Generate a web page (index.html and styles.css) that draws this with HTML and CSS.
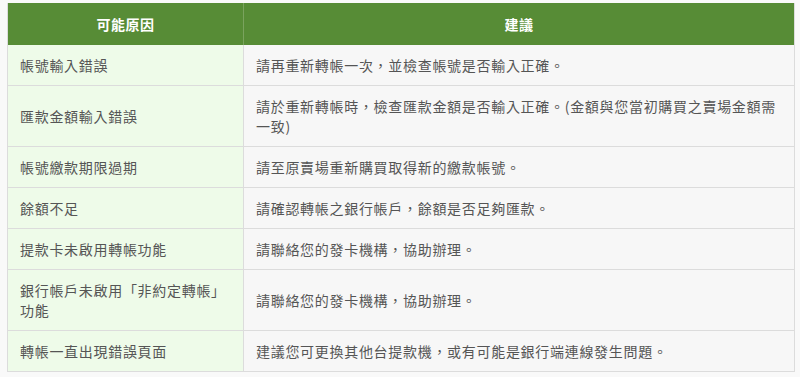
FILE: index.html
```html
<!DOCTYPE html>
<html lang="zh-Hant">
<head>
<meta charset="utf-8">
<link rel="stylesheet" href="styles.css">
</head>
<body>
<table class="faq">
  <colgroup><col class="c1"><col class="c2"></colgroup>
  <thead>
    <tr><th>可能原因</th><th>建議</th></tr>
  </thead>
  <tbody>
    <tr><td>帳號輸入錯誤</td><td>請再重新轉帳一次，並檢查帳號是否輸入正確。</td></tr>
    <tr><td>匯款金額輸入錯誤</td><td>請於重新轉帳時，檢查匯款金額是否輸入正確。(金額與您當初購買之賣場金額需一致)</td></tr>
    <tr><td>帳號繳款期限過期</td><td>請至原賣場重新購買取得新的繳款帳號。</td></tr>
    <tr><td>餘額不足</td><td>請確認轉帳之銀行帳戶，餘額是否足夠匯款。</td></tr>
    <tr><td>提款卡未啟用轉帳功能</td><td>請聯絡您的發卡機構，協助辦理。</td></tr>
    <tr><td>銀行帳戶未啟用「非約定轉帳」功能</td><td>請聯絡您的發卡機構，協助辦理。</td></tr>
    <tr><td>轉帳一直出現錯誤頁面</td><td>建議您可更換其他台提款機，或有可能是銀行端連線發生問題。</td></tr>
  </tbody>
</table>
</body>
</html>
```
FILE: styles.css
```css
html, body {
  margin: 0;
  padding: 0;
  background: #f9f9f9;
}
body {
  padding: 3px 6px 0 7px;
  font-family: "Noto Sans CJK TC", "Noto Sans", sans-serif;
  color: #555;
}
.faq {
  width: 788px;
  border-collapse: collapse;
  table-layout: fixed;
  border: 1px solid #dcdcdc;
  border-top: none;
  font-size: 14px;
  line-height: 20px;
}
.c1 { width: 236px; }
.faq th {
  background: #578c36;
  color: #fff;
  font-weight: 700;
  height: 42px;
  padding: 0;
  text-align: center;
  border-left: 1px solid #7aa35e;
  letter-spacing: 0.5px;
}
.faq th:first-child { border-left: none; }
.faq td {
  padding: 10px 12px 10px 12px;
  border-top: 1px solid #dcdcdc;
  border-left: 1px solid #dcdcdc;
  background: #f7f7f7;
  vertical-align: middle;
  letter-spacing: 0.7px;
}
.faq tbody tr:first-child td { border-top: none; }
.faq td:first-child {
  background: #eefbe9;
  border-left: none;
}
```
